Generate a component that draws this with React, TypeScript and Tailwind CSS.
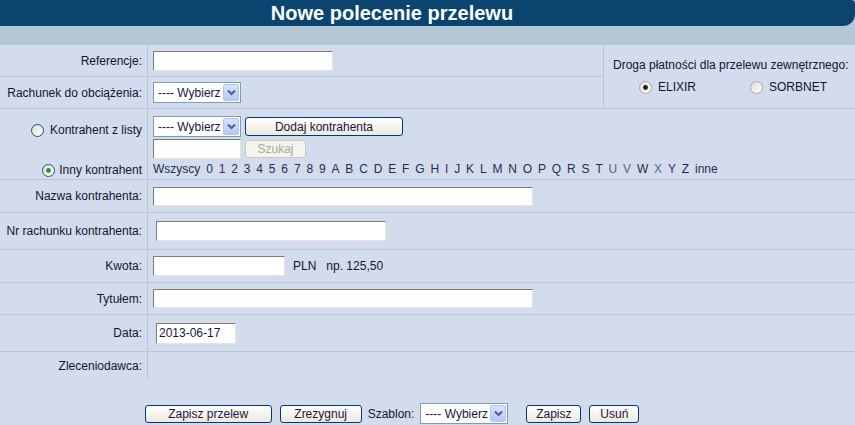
import React from 'react';

const LETTERS = ['0', '1', '2', '3', '4', '5', '6', '7', '8', '9', 'A', 'B', 'C', 'D', 'E', 'F', 'G', 'H', 'I', 'J', 'K', 'L', 'M', 'N', 'O', 'P', 'Q', 'R', 'S', 'T', 'U', 'V', 'W', 'X', 'Y', 'Z'];
const VISITED = ['1', 'I', 'Y'];
const FADED = ['U', 'V', 'X'];

type RadioProps = {
	checked?: boolean;
	disabled?: boolean;
};

const Radio = (props : RadioProps) => {
	const { checked, disabled } = props;
	const ring = disabled ? '#a8a8a0' : '#1c5180';
	const dot = disabled ? '#1a1a1a' : '#21a121';
	return (
		<svg width="13" height="13" viewBox="0 0 13 13" className="shrink-0">
			<defs>
				<linearGradient id="rfill" x1="0" y1="0" x2="1" y2="1">
					<stop offset="0" stopColor="#dcdcd4" />
					<stop offset="1" stopColor="#ffffff" />
				</linearGradient>
			</defs>
			<circle cx="6.5" cy="6.5" r="6" fill="url(#rfill)" stroke={ring} strokeWidth="1" />
			{checked && <circle cx="6.5" cy="6.5" r="2.4" fill={dot} />}
		</svg>
	);
};

const Select = () => (
	<div className="flex h-[21px] w-[88px] items-center justify-between border border-[#7f9db9] bg-white pl-[4px] pr-px">
		<span className="text-[12px] leading-none text-[#1a1440]">---- Wybierz</span>
		<span className="flex h-[17px] w-[16px] items-center justify-center rounded-[2px] border border-[#b4c6f4] bg-gradient-to-b from-[#d6e2fe] to-[#b5c9f8]">
			<svg width="9" height="7" viewBox="0 0 9 7">
				<path d="M1 1.5 L4.5 5 L8 1.5" fill="none" stroke="#4d6185" strokeWidth="2" />
			</svg>
		</span>
	</div>
);

const Input = ({ className, value } : { className: string; value?: string }) => (
	<div className={`flex items-center border border-b-[#e4e4e4] border-l-[#7c7c7c] border-r-[#e4e4e4] border-t-[#7c7c7c] bg-white pl-[2px] text-[12px] text-[#1a1440] ${className}`}>
		{value}
	</div>
);

const Button = ({ label, className, disabled } : { label: string; className: string; disabled?: boolean }) => (
	<div
		className={disabled
			? `flex items-center justify-center rounded-[3px] border border-[#cdcab9] bg-[#f4f3ee] text-[12px] text-[#aca899] ${className}`
			: `flex items-center justify-center rounded-[3px] border border-[#003c74] bg-gradient-to-b from-[#ffffff] to-[#ece9df] text-[12px] text-[#1a1440] ${className}`}
	>
		{label}
	</div>
);

const Row = ({ label, height, children, last } : { label: string; height: string; children?: React.ReactNode; last?: boolean }) => (
	<div className={`flex ${height} ${last ? '' : 'border-b border-[#b6c7d8]'}`}>
		<div className="flex w-[148px] shrink-0 items-center justify-end border-r border-[#b6c7d8] pr-[5px]">
			{label}
		</div>
		<div className="flex flex-1 items-center pl-[5px]">
			{children}
		</div>
	</div>
);

export default function App() {
	return (
		<div className="h-[425px] w-[855px] overflow-hidden bg-[#d3dcec] font-['Liberation_Sans',Arial,sans-serif] text-[12px] text-[#141432]">
			<div className="bg-white">
				<div className="bg-[#b4c7d5]">
					<div className="flex h-[26px] items-center justify-center rounded-br-[12px] rounded-tr-[4px] bg-[#0a446f] pr-[71px] text-[20px] font-bold text-white">
						Nowe polecenie przelewu
					</div>
					<div className="h-[19px]" />
				</div>
			</div>

			<div className="flex border-b border-[#b6c7d8]">
				<div className="flex-1">
					<Row label="Referencje:" height="h-[32px]">
						<Input className="h-[20px] w-[180px]" />
					</Row>
					<Row label="Rachunek do obciążenia:" height="h-[31px]" last>
						<Select />
					</Row>
				</div>
				<div className="w-[252px] border-l border-[#b6c7d8] pl-[9px] pt-[11px]">
					<div>Droga płatności dla przelewu zewnętrznego:</div>
					<div className="mt-[4px] flex items-center">
						<div className="ml-[26px] flex w-[111px] items-center gap-[6px]">
							<Radio checked disabled />
							<span>ELIXIR</span>
						</div>
						<div className="flex items-center gap-[6px]">
							<Radio disabled />
							<span>SORBNET</span>
						</div>
					</div>
				</div>
			</div>

			<div className="flex h-[71px] border-b border-[#b6c7d8]">
				<div className="flex w-[148px] shrink-0 flex-col items-end border-r border-[#b6c7d8] pr-[5px]">
					<div className="mt-[12px] flex items-center gap-[6px]">
						<Radio />
						<span>Kontrahent z listy</span>
					</div>
					<div className="mt-[22px] flex items-center gap-[4px]">
						<Radio checked />
						<span>Inny kontrahent</span>
					</div>
				</div>
				<div className="flex flex-1 flex-col pl-[5px] pt-[7px]">
					<div className="flex items-center gap-[4px]">
						<Select />
						<Button label="Dodaj kontrahenta" className="h-[19px] w-[158px]" />
					</div>
					<div className="mt-[2px] flex items-center gap-[4px]">
						<Input className="h-[20px] w-[88px]" />
						<Button label="Szukaj" className="h-[18px] w-[61px]" disabled />
					</div>
					<div className="mt-[2px] flex gap-[5.85px] leading-[16px] text-[#1f2d4d]">
						<span>Wszyscy</span>
						{LETTERS.map((l) => (
							<span
								key={l}
								className={VISITED.includes(l) ? 'text-[#4a1a78]' : FADED.includes(l) ? 'text-[#5a6580]' : ''}
							>
								{l}
							</span>
						))}
						<span>inne</span>
					</div>
				</div>
			</div>

			<Row label="Nazwa kontrahenta:" height="h-[33px]">
				<Input className="h-[19px] w-[380px]" />
			</Row>
			<Row label="Nr rachunku kontrahenta:" height="h-[37px]">
				<Input className="ml-[3px] h-[20px] w-[230px]" />
			</Row>
			<Row label="Kwota:" height="h-[33px]">
				<Input className="h-[20px] w-[132px]" />
				<span className="ml-[8px]">PLN</span>
				<span className="ml-[10px]">np. 125,50</span>
			</Row>
			<Row label="Tytułem:" height="h-[32px]">
				<Input className="h-[19px] w-[380px]" />
			</Row>
			<Row label="Data:" height="h-[37px]">
				<Input className="ml-[3px] h-[21px] w-[80px]" value="2013-06-17" />
			</Row>
			<Row label="Zleceniodawca:" height="h-[28px]" last />

			<div className="mt-[23px] flex items-center justify-center pr-[71px]">
				<Button label="Zapisz przelew" className="h-[18px] w-[127px]" />
				<Button label="Zrezygnuj" className="ml-[8px] h-[18px] w-[82px]" />
				<span className="ml-[6px]">Szablon:</span>
				<div className="ml-[6px]"><Select /></div>
				<Button label="Zapisz" className="ml-[18px] h-[18px] w-[55px]" />
				<Button label="Usuń" className="ml-[8px] h-[18px] w-[50px]" />
			</div>
		</div>
	);
}
